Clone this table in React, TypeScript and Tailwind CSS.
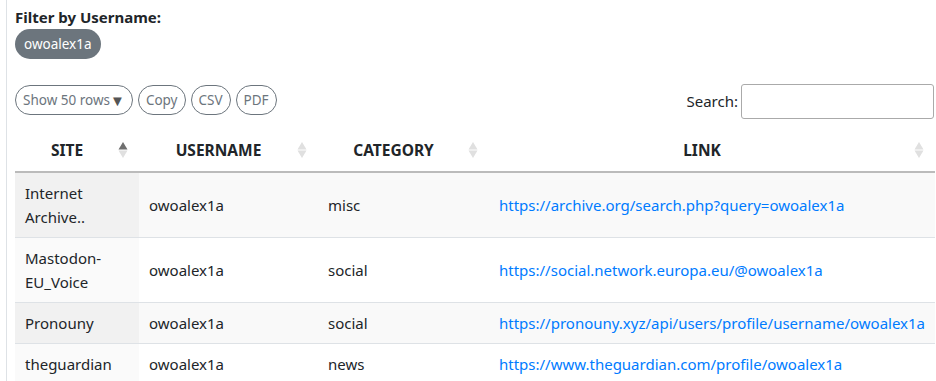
import React from 'react';

const rows = [
  { site: 'Internet Archive..', user: 'owoalex1a', cat: 'misc', link: 'https://archive.org/search.php?query=owoalex1a' },
  { site: 'Mastodon-EU_Voice', user: 'owoalex1a', cat: 'social', link: 'https://social.network.europa.eu/@owoalex1a' },
  { site: 'Pronouny', user: 'owoalex1a', cat: 'social', link: 'https://pronouny.xyz/api/users/profile/username/owoalex1a' },
  { site: 'theguardian', user: 'owoalex1a', cat: 'news', link: 'https://www.theguardian.com/profile/owoalex1a' },
];

function SortIcon({ active }: { active?: boolean }) {
  return (
    <svg width="10" height="18" viewBox="0 0 10 18" className="absolute right-[11px] top-1/2 -translate-y-1/2">
      <polygon points="5,1 9.5,8.5 0.5,8.5" fill={active ? '#6f6f6f' : '#e0e0e0'} />
      <polygon points="5,17 9.5,9.5 0.5,9.5" fill="#e0e0e0" />
    </svg>
  );
}

const headers = [
  { label: 'SITE', w: 'w-[124px]', active: true },
  { label: 'USERNAME', w: 'w-[179px]' },
  { label: 'CATEGORY', w: 'w-[171px]' },
  { label: 'LINK', w: '' },
];

export default function App() {
  return (
    <div className="h-[381px] overflow-hidden bg-white font-['Noto_Sans',sans-serif] text-[#212529]">
      <div className="ml-[6px] border-l border-[#dee2e6] h-full pl-[8px] pr-[2px] pt-[8px]">
        <p className="text-[15px] font-bold leading-[18px]">Filter by Username:</p>
        <span className="mt-[3px] inline-flex h-[30px] items-center rounded-full bg-[#6c757d] px-[9px] text-[13.5px] text-white">
          owoalex1a
        </span>

        <div className="mt-[25px] flex items-start justify-between">
          <div className="mt-px flex gap-[5px]">
            {['Show 50 rows', 'Copy', 'CSV', 'PDF'].map((b) => (
              <button key={b} className="flex h-[30px] items-center rounded-full border border-[#6c757d] px-[7px] text-[13.5px] text-[#6c757d]">
                {b}
                {b === 'Show 50 rows' && <span className="text-[15px] leading-none text-[#555]">▼</span>}
              </button>
            ))}
          </div>
          <label className="flex items-center gap-[3px] text-[15px]">
            Search:
            <input className="h-[35px] w-[193px] rounded-[3px] border border-[#aaa] bg-white" />
          </label>
        </div>

        <table className="mt-[9px] w-[920px] table-fixed border-collapse text-[15px] leading-6">
          <thead>
            <tr className="border-b-2 border-[#bbb]">
              {headers.map((h) => (
                <th key={h.label} className={`${h.w} relative pl-[10px] pr-[30px] pt-[10px] pb-[9px] text-center text-[15.5px] font-bold`}>
                  {h.label}
                  <SortIcon active={h.active} />
                </th>
              ))}
            </tr>
          </thead>
          <tbody>
            {rows.map((r, i) => (
              <tr key={r.site} className={`border-b border-[#dee2e6] ${i % 2 === 0 ? 'bg-[#f9f9f9]' : 'bg-white'}`}>
                <td className={`px-[10px] py-[8px] align-middle ${i % 2 === 0 ? 'bg-[#f1f1f1]' : 'bg-[#fafafa]'}`}>{r.site}</td>
                <td className="px-[10px] py-[8px]">{r.user}</td>
                <td className="px-[10px] py-[8px]">{r.cat}</td>
                <td className="px-[10px] py-[8px]">
                  <a href="#" className="text-[#007bff] whitespace-nowrap">{r.link}</a>
                </td>
              </tr>
            ))}
          </tbody>
        </table>
      </div>
    </div>
  );
}
